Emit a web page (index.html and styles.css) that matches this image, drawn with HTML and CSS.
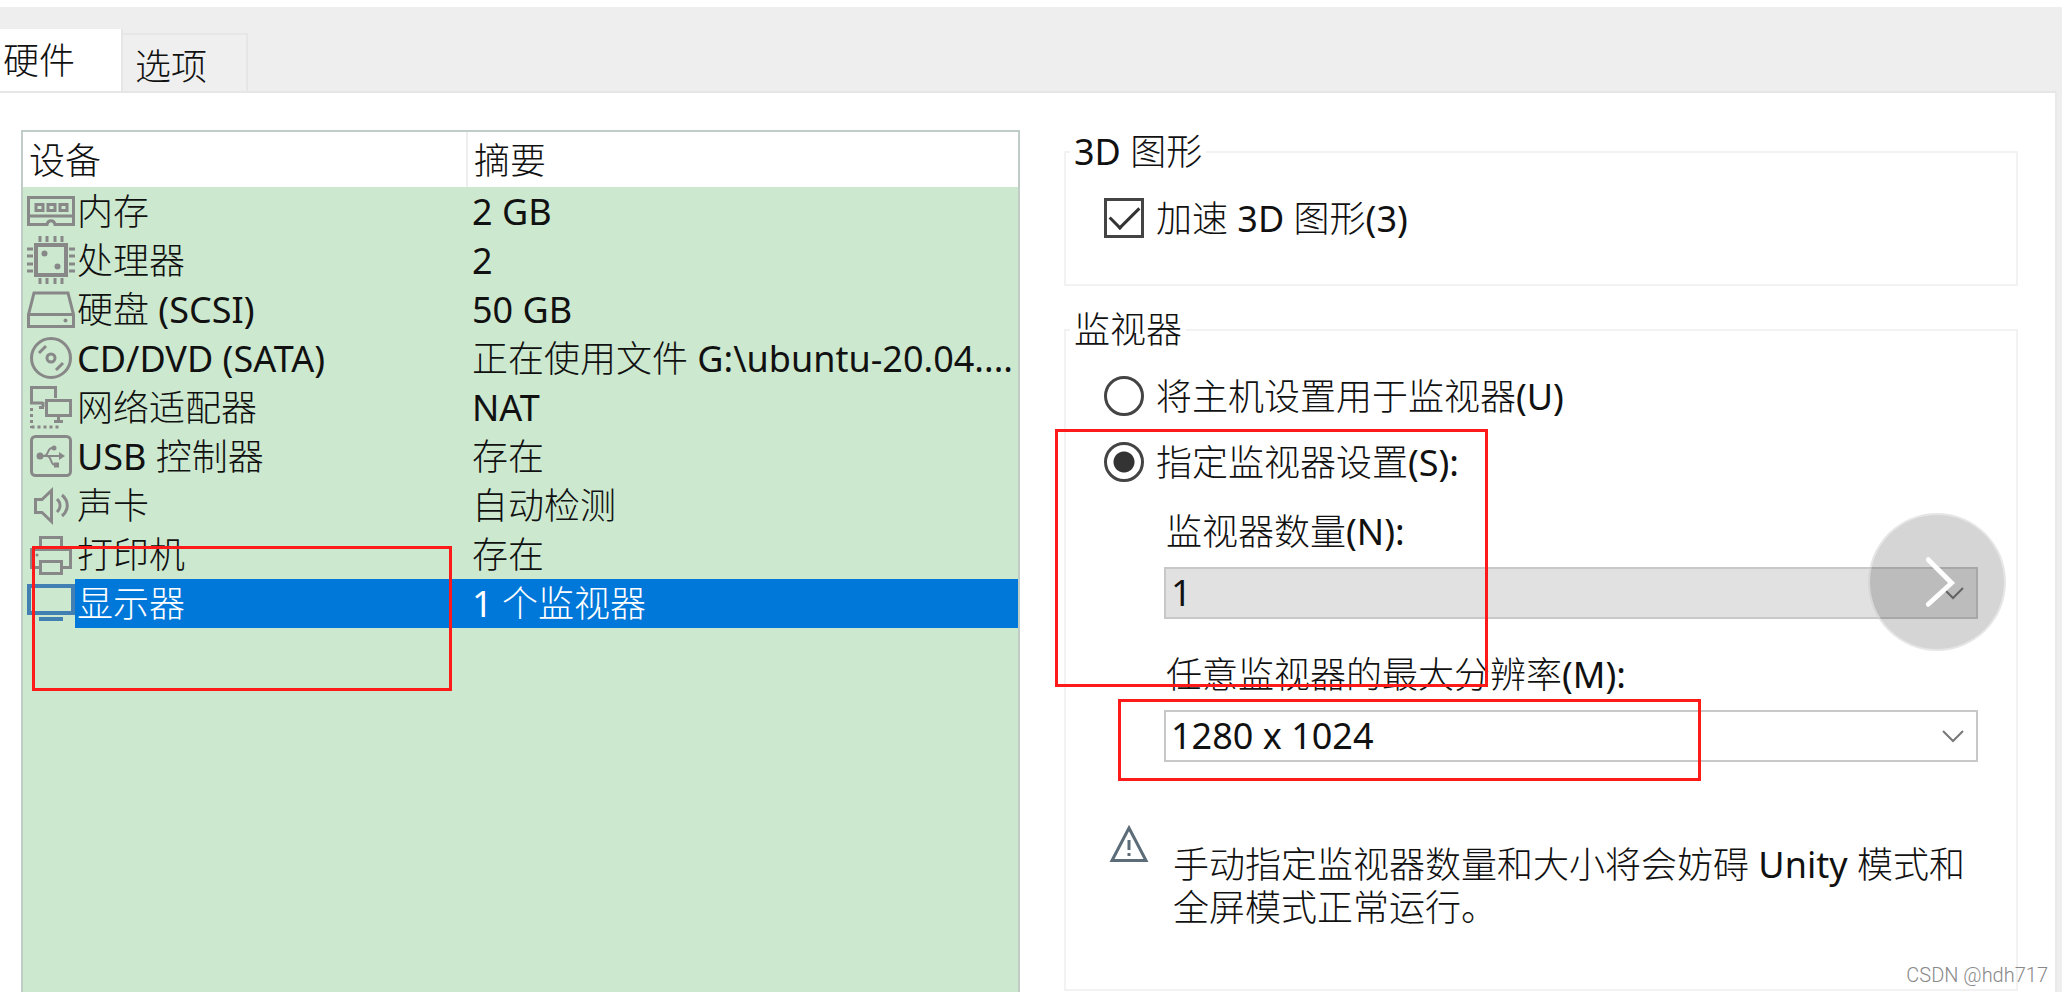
FILE: index.html
```html
<!DOCTYPE html>
<html lang="zh-CN">
<head>
  <meta charset="UTF-8">
  <meta name="viewport" content="width=device-width, initial-scale=1.0">
  <title>虚拟机设置</title>
  <link rel="stylesheet" href="styles.css">
</head>
<body>
  <nav class="tabs">
    <button type="button" class="tab active">硬件</button>
    <button type="button" class="tab">选项</button>
  </nav>

  <main class="panel">
    <section class="devices">
      <table>
        <thead>
          <tr><th class="col-device">设备</th><th>摘要</th></tr>
        </thead>
        <tbody>
          <tr>
            <td><div class="device">
              <svg class="icon" viewBox="0 0 48 48"><path d="M1.500 10.500h45v27H28c-1-5-7-5-8 0H1.500zM1.500 29h45"/><path d="M9 17.500h7v6H9zM21 17.500h7v6h-7zM33 17.500h7v6h-7z"/></svg>
              <span>内存</span></div></td>
            <td>2 GB</td>
          </tr>
          <tr>
            <td><div class="device">
              <svg class="icon" viewBox="0 0 48 48"><path class="thick" d="M9 9h30v30H9z"/><path d="M13 0v6M20 0v6M28 0v6M35 0v6M13 42v6M20 42v6M28 42v6M35 42v6M0 13h6M0 20h6M0 28h6M0 35h6M42 13h6M42 20h6M42 28h6M42 35h6"/><circle class="dot" cx="17.500" cy="17.500" r="3"/><circle class="dot" cx="30.500" cy="30.500" r="3"/></svg>
              <span>处理器</span></div></td>
            <td>2</td>
          </tr>
          <tr>
            <td><div class="device">
              <svg class="icon" viewBox="0 0 48 48"><path d="M1.500 29.500L7 8h34l5.500 21.500v12h-45zM1.500 29.500h45"/><circle class="dot" cx="38.500" cy="35.500" r="2"/></svg>
              <span>硬盘 (SCSI)</span></div></td>
            <td>50 GB</td>
          </tr>
          <tr>
            <td><div class="device">
              <svg class="icon" viewBox="0 0 48 48"><circle cx="24" cy="24" r="19.500"/><circle cx="24" cy="24" r="4"/><path d="M12 19l7-7M29 36l7-7"/></svg>
              <span>CD/DVD (SATA)</span></div></td>
            <td>正在使用文件 G:\ubuntu-20.04....</td>
          </tr>
          <tr>
            <td><div class="device">
              <svg class="icon" viewBox="0 0 48 48"><path d="M16 20H4.500V4.500h24V15M19.500 17.500h24v15h-24zM31.500 33v5M27 38.500h9M16 19v5M12 24.500h5"/><path class="dots" d="M4.500 25v20M4.500 44h28"/></svg>
              <span>网络适配器</span></div></td>
            <td>NAT</td>
          </tr>
          <tr>
            <td><div class="device">
              <svg class="icon" viewBox="0 0 48 48"><rect x="4.500" y="4.500" width="39" height="39" rx="4"/><path class="thin" d="M13 24h21M17 24c5 0 3-8 8-8h2M20 24c5 0 3 9 8 9h2"/><circle class="dot" cx="13" cy="24" r="3.500"/><circle class="dot" cx="27" cy="16" r="2.500"/><path class="dot" d="M27 30.500h5v5h-5zM32 20l6 4-6 4z"/></svg>
              <span>USB 控制器</span></div></td>
            <td>存在</td>
          </tr>
          <tr>
            <td><div class="device">
              <svg class="icon" viewBox="0 0 48 48"><path d="M8.500 18.500H15l9.500-9v31l-9.500-9H8.500z"/><path d="M30 18c4 4 4 9 0 13M35 14c7 6 7 15 0 21"/></svg>
              <span>声卡</span></div></td>
            <td>自动检测</td>
          </tr>
          <tr>
            <td><div class="device">
              <svg class="icon" viewBox="0 0 48 48"><path d="M13.500 19V7.500h21V19M13 37.500H4.500v-18h39v18H35M13.500 31.500h21v12h-21z"/><circle class="dot" cx="10" cy="25" r="1.500"/></svg>
              <span>打印机</span></div></td>
            <td>存在</td>
          </tr>
          <tr class="selected">
            <td><div class="device">
              <svg class="icon" viewBox="0 0 48 48"><path class="thick" d="M2 7h44v27H2zM12 40h24"/></svg>
              <span>显示器</span></div></td>
            <td>1 个监视器</td>
          </tr>
        </tbody>
      </table>
      <div class="mark mark-device"></div>
    </section>

    <form class="settings">
      <fieldset>
        <legend>3D 图形</legend>
        <label class="option"><input type="checkbox" checked><span>加速 3D 图形(3)</span></label>
      </fieldset>

      <fieldset class="monitor">
        <legend>监视器</legend>
        <label class="option"><input type="radio" name="monitor"><span>将主机设置用于监视器(U)</span></label>
        <label class="option"><input type="radio" name="monitor" checked><span>指定监视器设置(S):</span></label>

        <div class="field">
          <label for="count">监视器数量(N):</label>
          <div class="select">
            <select id="count" class="gray"><option>1</option></select>
            <svg class="chevron" viewBox="0 0 22 14"><path d="M1 2l10 10L21 2"/></svg>
          </div>
        </div>
        <div class="field">
          <label for="resolution">任意监视器的最大分辨率(M):</label>
          <div class="select">
            <select id="resolution"><option>1280 x 1024</option></select>
            <svg class="chevron" viewBox="0 0 22 14"><path d="M1 2l10 10L21 2"/></svg>
          </div>
        </div>

        <div class="warning">
          <svg viewBox="0 0 40 40"><path d="M20 4L37 36.500H3zM20 16v10M20 29v3"/></svg>
          <p>手动指定监视器数量和大小将会妨碍 Unity 模式和全屏模式正常运行。</p>
        </div>
      </fieldset>

      <div class="mark mark-count"></div>
      <div class="mark mark-resolution"></div>
      <button type="button" class="next" aria-label="下一张">
        <svg viewBox="0 0 138 138"><path d="M60 46l24 24-24 22"/></svg>
      </button>
    </form>
  </main>

  <div class="watermark">CSDN @hdh717</div>
</body>
</html>
```

FILE: styles.css
```css
* { box-sizing: border-box; }
body {
  margin: 0; min-height: 100vh; padding-top: 7px;
  display: flex; flex-direction: column;
  position: relative; background: #fff; color: #111;
  font-family: "Noto Sans", "Noto Sans CJK SC Light", "Noto Sans CJK SC", sans-serif;
  font-size: 36px; line-height: 44px;
}
button, select, input { font: inherit; color: inherit; margin: 0; }

.tabs { height: 84px; display: flex; align-items: flex-end; background: #eee; }
.tab {
  width: 125px; height: 58px; padding: 8px 0 0 12px;
  text-align: left; background: #efefef;
  border: 2px solid #e6e6e6; border-bottom: 0; border-left: 0;
}
.tab.active { width: 123px; height: 62px; padding: 2px 0 0 3px; background: #fff; border-top: 0; }

.panel {
  flex: 1; margin-right: 5px; padding: 0 37px 0 21px;
  display: grid; grid-template-columns: 999fr 954fr; column-gap: 44px;
  border-top: 2px solid #e6e6e6; border-right: 2px solid #e9e9e9;
  box-shadow: 5px 0 0 #eee;
}

.devices { position: relative; margin-top: 37px; border: 2px solid #bfcdc6; border-bottom: 0; background: #cce8cf; }
table { width: 100%; table-layout: fixed; border-collapse: collapse; }
th { height: 55px; padding: 2px 6px 0; text-align: left; font-weight: normal; background: #fff; }
.col-device { width: 444px; border-right: 2px solid #eee; }
td { height: 49px; padding: 0 0 0 5px; white-space: nowrap; }
td:first-child { padding-left: 4px; }
.device { display: flex; height: 49px; }
.device span { flex: 1; padding-left: 2px; line-height: 49px; }
.selected td:last-child, .selected span { background: #0078d9; color: #fff; }

.icon { width: 48px; height: 48px; fill: none; stroke: #888; stroke-width: 3; }
.icon .dot { fill: #888; stroke: none; }
.icon .thin { stroke-width: 2; }
.icon .thick { stroke-width: 4; }
.icon .dots { stroke-dasharray: 3 3; }
.selected .icon { stroke: #427fb3; }

.settings { position: relative; display: flex; flex-direction: column; gap: 26px; padding: 41px 0 1px; }
fieldset { margin: 0; padding: 28px 38px 46px; border: 2px solid #f2f2f2; min-width: 0; }
legend { margin-left: -34px; padding: 0 4px; line-height: 36px; }
.monitor { flex: 1; padding-bottom: 40px; }
.option { display: flex; align-items: center; gap: 12px; height: 40px; }
.option span { padding-top: 2px; }
.option + .option { margin-top: 26px; }
input { appearance: none; width: 40px; height: 40px; border: 3px solid #444; background: #fff; }
input[type="radio"] { border-radius: 50%; }
input[type="radio"]:checked { background: radial-gradient(circle, #333 10px, #fff 11px); }
input[type="checkbox"]:checked { display: grid; place-items: center; }
input[type="checkbox"]:checked::before {
  content: ""; width: 26px; height: 13px; margin-bottom: 8px;
  border-left: 3px solid #333; border-bottom: 3px solid #333; transform: rotate(-45deg);
}

.field { margin: 28px 0 0 60px; }
.field + .field { margin-top: 34px; }
.field label { display: block; margin: 0 0 13px 2px; }
.select { position: relative; }
select {
  appearance: none; display: block; width: 100%; height: 52px;
  padding: 0 50px 0 5px; border: 2px solid #c8c8c8; border-radius: 0; background: #fff;
}
select.gray { background: #e1e1e1; }
.chevron { position: absolute; right: 14px; top: 19px; width: 22px; height: 14px; fill: none; stroke: #777; stroke-width: 2; pointer-events: none; }

.warning { display: flex; gap: 24px; margin-top: 62px; padding-left: 5px; }
.warning svg { flex: none; width: 40px; height: 40px; fill: none; stroke: #5c6c78; stroke-width: 3; }
.warning p { margin: 19px 0 0; line-height: 43px; }

.mark { position: absolute; border: 3px solid #ff1a1a; pointer-events: none; }
.mark-device { left: 9px; top: 414px; width: 420px; height: 145px; }
.mark-count { left: -9px; top: 336px; width: 433px; height: 258px; }
.mark-resolution { left: 54px; top: 606px; width: 583px; height: 82px; }

.next {
  position: absolute; right: 12px; top: 420px; width: 138px; height: 138px; padding: 0;
  border: 2px solid rgba(255,255,255,0.4); border-radius: 50%; background: rgba(0,0,0,0.165);
}
.next svg { display: block; fill: none; stroke: #fff; stroke-width: 5; stroke-linecap: round; }

.watermark { position: absolute; right: 14px; bottom: 4px; color: #888; font-family: Roboto, sans-serif; font-size: 20px; font-weight: 300; line-height: 26px; }
```
